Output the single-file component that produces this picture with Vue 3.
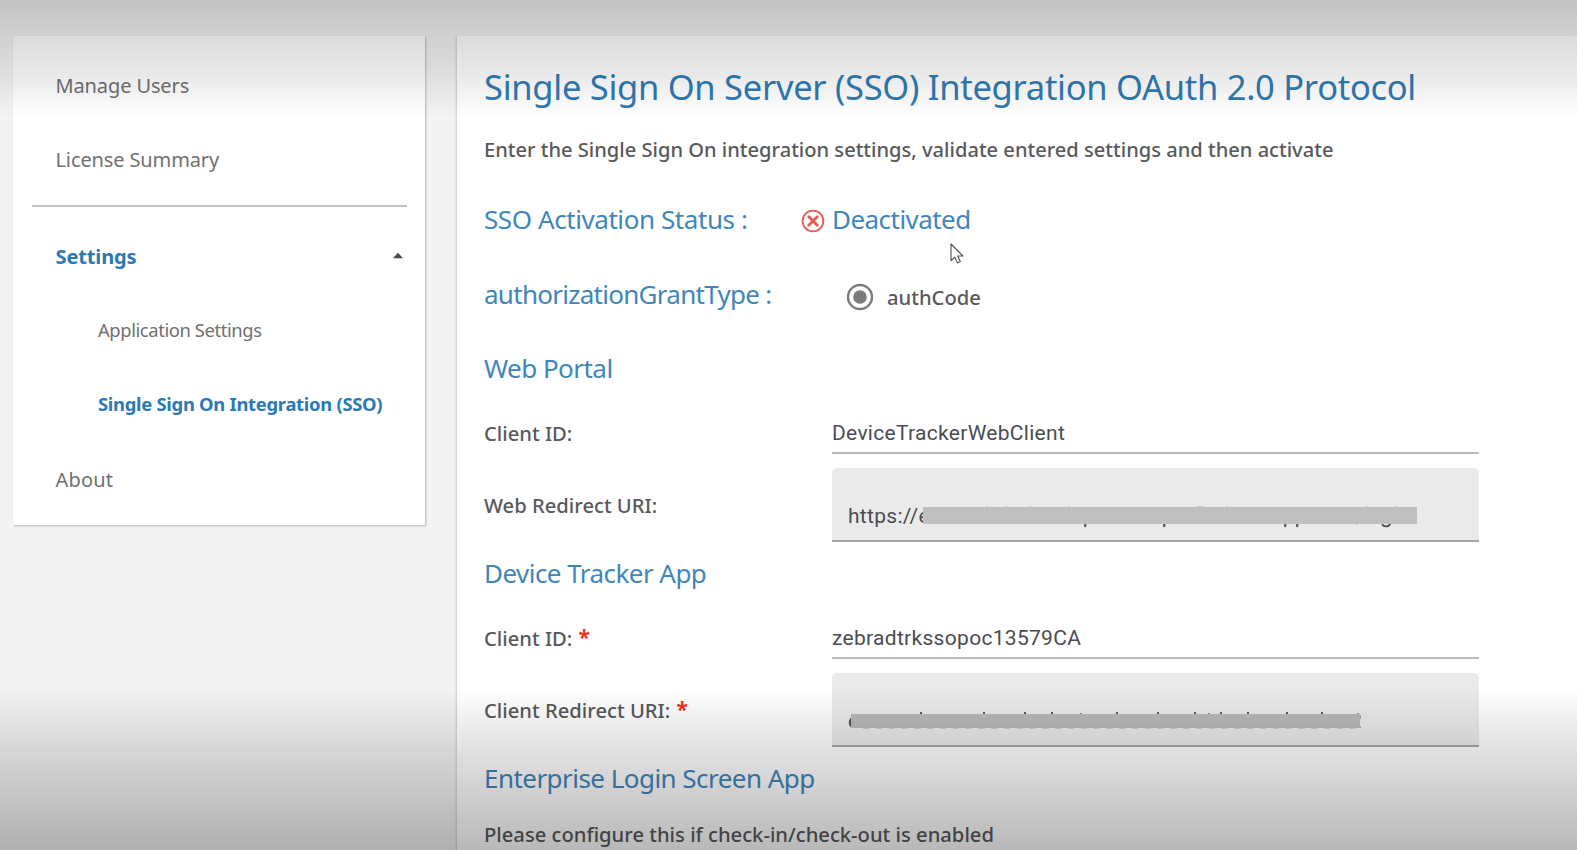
<script setup>
const topLinks = ['Manage Users', 'License Summary']
const settingsLinks = [
  { label: 'Application Settings', active: false },
  { label: 'Single Sign On Integration (SSO)', active: true },
]

// Fragments of the masked values that stick out around the cover bars: [x, y, width, height]
const webMarks = [
  [63, -1, 2, 1], [82, -1, 2, 1], [106, -1, 2, 1], [145, -1, 2, 1],
  [274, -1, 7, 1], [303, -1, 2, 1], [443, -1, 2, 1], [472, -1, 2, 1],
  [161, 17, 2.4, 3], [240, 17, 2.4, 3], [361, 17, 2.4, 3], [373, 17, 2.4, 3],
  [433, 17, 2, 1],
]
const tallMarks = [69, 132, 173, 200, 265, 306, 343, 369, 396, 435, 470]
const shortMarks = [229, 357, 506]
const lowMarks = Array.from({ length: 39 }, (_, i) => 12 + i * 12.8)
</script>

<template>
  <div class="page">
    <aside class="sidebar">
      <a v-for="link in topLinks" :key="link" class="item">{{ link }}</a>
      <hr class="divider" />
      <a class="item active">
        <span>Settings</span>
        <svg class="caret" width="12" height="7" viewBox="0 0 12 7"><path d="M1 6.300 6 .8l5 5.500z" fill="#4a4a4a" /></svg>
      </a>
      <a v-for="link in settingsLinks" :key="link.label" class="item sub" :class="{ active: link.active }">{{ link.label }}</a>
      <a class="item about">About</a>
    </aside>

    <main class="panel">
      <h1>Single Sign On Server (SSO) Integration OAuth 2.0 Protocol</h1>
      <p class="intro">Enter the Single Sign On integration settings, validate entered settings and then activate</p>

      <div class="status-row">
        <span class="heading-text status-label">SSO Activation Status :</span>
        <svg class="status-icon" width="24" height="24" viewBox="0 0 24 24" fill="none" stroke="#ea5a5a">
          <circle cx="12" cy="12" r="10.4" stroke-width="1.9" />
          <path d="M7 7l10 10M17 7L7 17" stroke-width="2.9" />
        </svg>
        <span class="heading-text">Deactivated</span>
        <svg class="cursor" width="15" height="22" viewBox="0 0 15 22">
          <path d="M1 1v16.6l3.8-3.5 2.6 5.8 2.9-1.3-2.6-5.6h5.2z" fill="#fff" stroke="#4c4c55" stroke-width="1.1" stroke-linejoin="round" />
        </svg>
      </div>

      <div class="status-row grant-row">
        <span class="heading-text grant-label">authorizationGrantType :</span>
        <svg class="radio" width="28" height="28" viewBox="0 0 28 28">
          <circle cx="14" cy="14" r="12" fill="none" stroke="#7b7b7b" stroke-width="2.4" />
          <circle cx="14" cy="14" r="6.800" fill="#7b7b7b" />
        </svg>
        <span class="label radio-text">authCode</span>
      </div>

      <h2 class="first">Web Portal</h2>
      <div class="field">
        <span class="label">Client ID:</span>
        <div class="input">DeviceTrackerWebClient</div>
      </div>
      <div class="field tall">
        <span class="label">Web Redirect URI:</span>
        <div class="input filled">
          <span>https://e</span>
          <div class="mask web">
            <svg width="494" height="17" overflow="visible" fill="#4b4f58">
              <rect v-for="(m, i) in webMarks" :key="i" :x="m[0]" :y="m[1]" :width="m[2]" :height="m[3]" :opacity="m[3] > 1 ? 0.9 : 0.2" />
              <path d="M459 17.4c2 2.600 6.600 2.600 8.400-.4" fill="none" stroke="#4b4f58" stroke-width="1.800" />
            </svg>
          </div>
        </div>
      </div>

      <h2>Device Tracker App</h2>
      <div class="field">
        <span class="label">Client ID: <b class="required">*</b></span>
        <div class="input">zebradtrkssopoc13579CA</div>
      </div>
      <div class="field tall">
        <span class="label">Client Redirect URI: <b class="required">*</b></span>
        <div class="input filled">
          <span>c</span>
          <div class="mask client">
            <svg width="509" height="14" overflow="visible" fill="#3d414c">
              <rect v-for="x in tallMarks" :key="'t' + x" :x="x" y="-2" width="2" height="2" opacity=".85" />
              <rect v-for="x in shortMarks" :key="'s' + x" :x="x" y="-1" width="2" height="1" opacity=".6" />
              <rect v-for="x in lowMarks" :key="'l' + x" :x="x" y="14" width="6" height="1" opacity=".2" />
              <rect x="509" y="1" width="1" height="4" opacity=".4" />
              <rect x="509" y="12" width="1" height="2" opacity=".4" />
            </svg>
          </div>
        </div>
      </div>

      <h2>Enterprise Login Screen App</h2>
      <p class="label note">Please configure this if check-in/check-out is enabled</p>
    </main>

    <div class="shade top"></div>
    <div class="shade bottom"></div>
  </div>
</template>

<style>
body {
  margin: 0;
}
</style>

<style scoped>
.page {
  position: relative;
  box-sizing: border-box;
  width: 1577px;
  height: 850px;
  padding: 36px 0 0 13px;
  overflow: hidden;
  display: flex;
  align-items: flex-start;
  gap: 32px;
  background: #f3f3f3;
  font-family: "Noto Sans", "Open Sans", sans-serif;
}

.sidebar {
  box-sizing: border-box;
  flex: none;
  width: 412px;
  height: 489px;
  padding-top: 12px;
  background: #fff;
  box-shadow: 1px 1px 2px rgba(0, 0, 0, 0.26);
}

.item {
  box-sizing: border-box;
  display: flex;
  align-items: center;
  justify-content: space-between;
  height: 74.3px;
  padding: 0 21px 0 42.5px;
  color: #707072;
  font-size: 20px;
  letter-spacing: -0.12px;
  white-space: nowrap;
}

.item.about {
  letter-spacing: 0.2px;
}

.item.sub {
  padding-left: 85px;
  padding-bottom: 2px;
  font-size: 18.4px;
  letter-spacing: -0.4px;
}

.item.sub.active {
  letter-spacing: -0.28px;
}

.item.active {
  color: #2a79b6;
  font-weight: 700;
}

.caret {
  margin-top: -2px;
}

.divider {
  width: 375px;
  height: 2px;
  margin: 8.4px 0 12px 19px;
  border: 0;
  background: #c0c0c0;
}

.panel {
  box-sizing: border-box;
  flex: 1;
  height: 830px;
  padding: 21px 0 0 27px;
  background: #fff;
  box-shadow: -1px 1px 2px rgba(0, 0, 0, 0.16);
  white-space: nowrap;
}

h1,
h2,
p {
  display: flex;
  align-items: center;
  margin: 0;
}

h1 {
  box-sizing: border-box;
  height: 60px;
  padding-bottom: 1px;
  color: #2f7ab3;
  font-size: 34.5px;
  font-weight: 400;
  letter-spacing: -0.28px;
}

.intro,
.label {
  color: #58595b;
  font-size: 20.2px;
  font-weight: 500;
}

.intro {
  height: 40px;
  margin-top: 12px;
  font-size: 20.1px;
}

.status-row {
  position: relative;
  display: flex;
  align-items: center;
  height: 50px;
  margin-top: 25px;
}

.grant-row {
  margin-top: 25px;
}

.heading-text,
h2 {
  color: #3f86bb;
  font-size: 26px;
  font-weight: 400;
  letter-spacing: -0.54px;
}

.status-label {
  width: 317px;
  letter-spacing: -0.42px;
}

.status-icon {
  margin: 4px 7px 0 0;
}

.grant-label {
  width: 362px;
  letter-spacing: -0.72px;
}

.radio {
  margin-top: 5px;
}

.radio-text {
  margin: 5px 0 0 13px;
}

.cursor {
  position: absolute;
  left: 466px;
  top: 49px;
}

h2 {
  height: 40px;
  margin-top: 11px;
  padding-bottom: 1px;
}

h2.first {
  margin-top: 28.5px;
}

.field {
  display: grid;
  grid-template-columns: 348px 647px;
  align-items: center;
  height: 42px;
  margin-top: 23px;
}

.field.tall {
  height: 74px;
  margin-top: 14px;
}

.required {
  position: relative;
  top: -1px;
  left: 1px;
  color: #ea3323;
  font-size: 21px;
  line-height: 1;
}

.input {
  position: relative;
  box-sizing: border-box;
  display: flex;
  align-items: center;
  height: 100%;
  padding-top: 2px;
  border-bottom: 2px solid #b9b9b9;
  color: #4a4c51;
  font-family: Roboto, sans-serif;
  font-size: 21px;
  letter-spacing: 0.3px;
}

.input.filled {
  padding: 24px 0 0 16px;
  border-bottom-color: #a6a6a8;
  border-radius: 5px 5px 0 0;
  background: #eaeaea;
}

.mask {
  position: absolute;
  background: #bfbfbf;
}

.mask svg {
  display: block;
}

.mask.web {
  left: 91px;
  top: 39px;
  width: 494px;
  height: 17px;
}

.mask.client {
  left: 19px;
  top: 41px;
  width: 509px;
  height: 14px;
  background: #b9b9b9;
}

.note {
  height: 40px;
  margin-top: 15px;
}

.shade {
  position: absolute;
  left: 0;
  right: 0;
  pointer-events: none;
}

.shade.top {
  top: 0;
  height: 118px;
  background: linear-gradient(rgba(0, 0, 0, 0.195), rgba(0, 0, 0, 0.142) 31%, rgba(0, 0, 0, 0.09) 62%, transparent);
}

.shade.bottom {
  bottom: 0;
  height: 163px;
  background: linear-gradient(transparent, rgba(0, 0, 0, 0.11) 35%, rgba(0, 0, 0, 0.2) 70%, rgba(0, 0, 0, 0.28));
}
</style>
